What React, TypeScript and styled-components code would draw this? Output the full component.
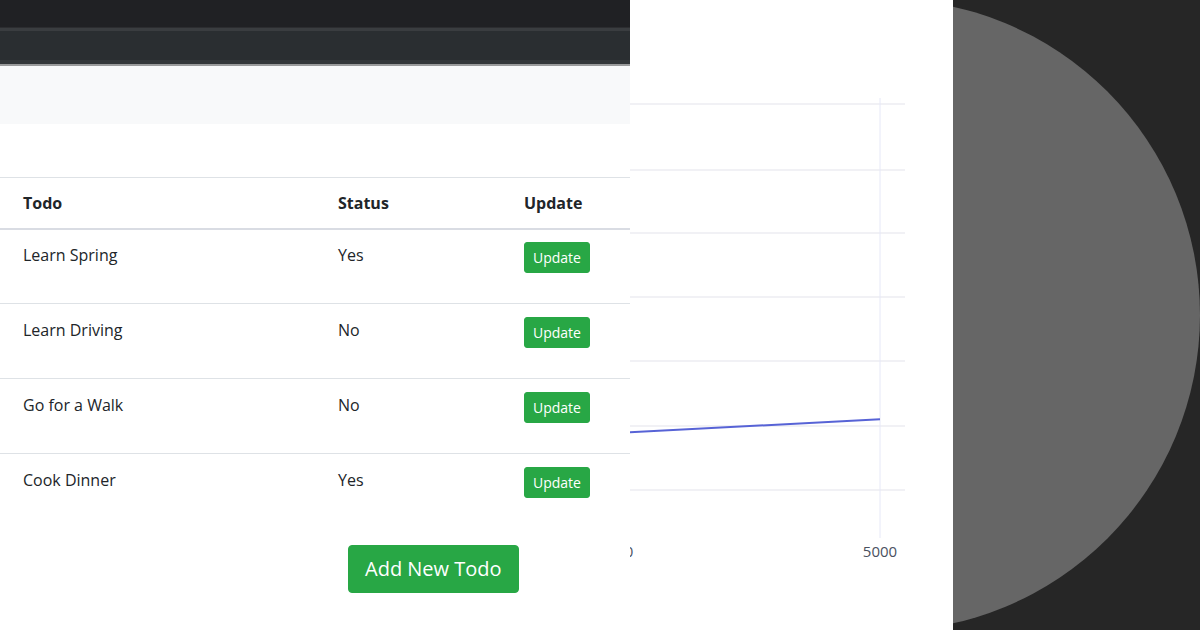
import React from "react";
import styled, { createGlobalStyle } from "styled-components";

type Todo = { id: number; description: string; done: boolean };

const todos: Todo[] = [
  { id: 1, description: "Learn Spring", done: true },
  { id: 2, description: "Learn Driving", done: false },
  { id: 3, description: "Go for a Walk", done: false },
  { id: 4, description: "Cook Dinner", done: true },
];

const gridLines = [104, 170, 233, 297, 361, 426, 490];

function App() {
  return (
    <>
      <GlobalStyle />
      <Page>
        <AppPane>
          <TitleBar />
          <Toolbar />
          <NavBar />
          <Content>
            <Table>
              <colgroup>
                <col style={{ width: 326 }} />
                <col style={{ width: 186 }} />
                <col />
              </colgroup>
              <thead>
                <tr>
                  <HeadCell>Todo</HeadCell>
                  <HeadCell>Status</HeadCell>
                  <HeadCell>Update</HeadCell>
                </tr>
              </thead>
              <tbody>
                {todos.map((todo) => (
                  <tr key={todo.id}>
                    <Cell>{todo.description}</Cell>
                    <Cell>{todo.done ? "Yes" : "No"}</Cell>
                    <Cell>
                      <SmallButton>Update</SmallButton>
                    </Cell>
                  </tr>
                ))}
              </tbody>
            </Table>
            <AddRow>
              <LargeButton>Add New Todo</LargeButton>
            </AddRow>
          </Content>
        </AppPane>

        <ChartPane>
          <svg width="323" height="630" viewBox="0 0 323 630">
            {gridLines.map((y) => (
              <line key={y} x1="0" x2="275" y1={y} y2={y} stroke="#ecedf2" strokeWidth="1.5" />
            ))}
            <line x1="250" x2="250" y1="98" y2="538" stroke="#e6e8f7" strokeWidth="1" />
            <line x1="0" y1="432.3" x2="250" y2="419.3" stroke="#5763d6" strokeWidth="2" />
            <TickLabel x="-1" y="557" textAnchor="middle">0</TickLabel>
            <TickLabel x="250" y="557" textAnchor="middle">5000</TickLabel>
          </svg>
        </ChartPane>

        <DecorPane>
          <Circle />
        </DecorPane>
      </Page>
    </>
  );
}

const GlobalStyle = createGlobalStyle`
  html, body {
    margin: 0;
    padding: 0;
    background: #ffffff;
  }
  body {
    font-family: "Open Sans", "Noto Sans", sans-serif;
    color: #212529;
  }
`;

const Page = styled.div`
  display: flex;
  width: 1200px;
  height: 630px;
  overflow: hidden;
`;

const AppPane = styled.div`
  display: flex;
  flex-direction: column;
  width: 630px;
  flex-shrink: 0;
  overflow: hidden;
  background: #ffffff;
`;

const TitleBar = styled.div`
  height: 27px;
  background: #202124;
  border-bottom: 1px solid #2c2d30;
`;

const Toolbar = styled.div`
  height: 29px;
  background: #2a2e31;
  border-top: 3px solid #3a3d40;
  border-bottom: 4px solid #33373a;
  box-shadow: 0 2px 0 #9a9b9c;
  margin-bottom: 2px;
`;

const NavBar = styled.div`
  height: 58px;
  background: #f8f9fa;
`;

const Content = styled.div`
  display: flex;
  flex-direction: column;
  padding-top: 53px;
`;

const Table = styled.table`
  width: 820px;
  table-layout: fixed;
  border-collapse: collapse;
  font-size: 16px;
  line-height: 24px;
`;

const HeadCell = styled.th`
  text-align: left;
  font-weight: 700;
  height: 51px;
  padding: 0 12px;
  border-top: 1px solid #dee2e6;
  border-bottom: 2px solid #d9dce3;
  box-sizing: border-box;
  vertical-align: middle;

  &:first-child {
    padding-left: 23px;
  }
`;

const Cell = styled.td`
  height: 75px;
  padding: 14px 12px 11px;
  border-top: 1px solid #dee2e6;
  vertical-align: top;
  color: #212529;
  box-sizing: border-box;

  &:first-child {
    padding-left: 23px;
  }

  tr:first-child > & {
    border-top: none;
    padding-top: 13px;
  }
`;

const SmallButton = styled.button`
  display: inline-block;
  height: 31px;
  margin-top: -1px;
  padding: 0 8px;
  font-family: inherit;
  font-size: 14px;
  line-height: 29px;
  color: #ffffff;
  background: #28a745;
  border: 1px solid #28a745;
  border-radius: 3px;
  cursor: pointer;
`;

const AddRow = styled.div`
  display: flex;
  padding: 16px 0 0 348px;
`;

const LargeButton = styled.button`
  height: 48px;
  padding: 0 16px;
  font-family: inherit;
  font-size: 20px;
  line-height: 30px;
  color: #ffffff;
  background: #28a745;
  border: 1px solid #28a745;
  border-radius: 4px;
  cursor: pointer;
`;

const ChartPane = styled.div`
  width: 323px;
  flex-shrink: 0;
  background: #ffffff;
  overflow: hidden;

  svg {
    display: block;
    overflow: hidden;
  }
`;

const TickLabel = styled.text`
  font-family: "Open Sans", "Noto Sans", sans-serif;
  font-size: 15px;
  fill: #4a5160;
`;

const DecorPane = styled.div`
  position: relative;
  flex: 1;
  background: #262626;
  overflow: hidden;
`;

const Circle = styled.div`
  position: absolute;
  left: -385px;
  top: -1px;
  width: 632px;
  height: 632px;
  border-radius: 50%;
  background: #666666;
`;

export default App;
